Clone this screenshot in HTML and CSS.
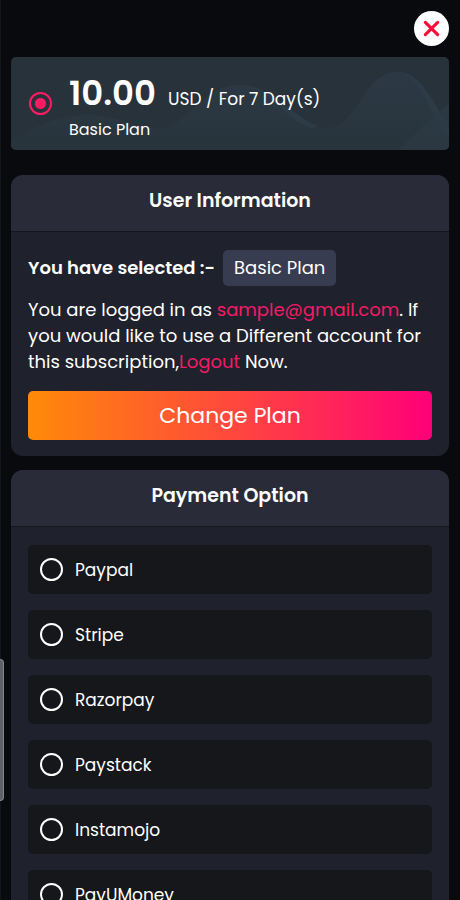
FILE: index.html
```html
<!DOCTYPE html>
<html lang="en">
<head>
<meta charset="utf-8">
<meta name="viewport" content="width=device-width, initial-scale=1">
<title>Subscription</title>
<link rel="stylesheet" href="styles.css">
</head>
<body>
<span class="scroll-thumb" aria-hidden="true"></span>
<main class="screen">
  <header class="topbar">
    <button class="close" type="button" aria-label="Close">
      <svg viewBox="0 0 34 34" aria-hidden="true"><path d="M11 11 23 23M23 11 11 23"/></svg>
    </button>
  </header>

  <label class="plan" for="basic-plan">
    <svg class="waves" viewBox="0 0 438 93" preserveAspectRatio="none" aria-hidden="true">
      <defs>
        <linearGradient id="wave" gradientUnits="userSpaceOnUse" x1="0" y1="15" x2="0" y2="93">
          <stop offset="0" stop-color="#2c3945"/>
          <stop offset="1" stop-color="#28343c"/>
        </linearGradient>
      </defs>
      <path fill="url(#wave)" d="M0 86C28 66 50 58 78 58C108 58 126 72 148 72C176 72 190 28 228 28C262 28 282 67 313 71C348 74 350 15 387 15C412 15 423 58 438 80V93H0Z"/>
      <path fill="#2d3b47" d="M387 15C412 15 423 50 438 68V83C423 68 412 20 387 15Z"/>
      <path fill="#2d3b47" d="M228 28C262 28 282 60 307 69L300 71C272 62 262 32 228 28Z"/>
      <path fill="#2c3a45" opacity=".7" d="M387 93C404 78 420 58 438 47V93Z"/>
    </svg>
    <input class="radio" type="radio" id="basic-plan" name="plan" checked>
    <span class="plan-text">
      <span class="price"><strong>10.00</strong> <span>USD / For 7 Day(s)</span></span>
      <span class="plan-name">Basic Plan</span>
    </span>
  </label>

  <section class="card">
    <h2>User Information</h2>
    <div class="card-body">
      <p class="selected"><strong>You have selected :-</strong> <span class="badge">Basic Plan</span></p>
      <p class="account">You are logged in as <a href="#account">sample@gmail.com</a>. If<br>you would like to use a Different account for<br>this subscription,<a href="#logout">Logout</a> Now.</p>
      <button class="change" type="button">Change Plan</button>
    </div>
  </section>

  <section class="card">
    <h2>Payment Option</h2>
    <div class="card-body options">
      <label class="option"><input class="radio" type="radio" name="payment">Paypal</label>
      <label class="option"><input class="radio" type="radio" name="payment">Stripe</label>
      <label class="option"><input class="radio" type="radio" name="payment">Razorpay</label>
      <label class="option"><input class="radio" type="radio" name="payment">Paystack</label>
      <label class="option"><input class="radio" type="radio" name="payment">Instamojo</label>
      <label class="option"><input class="radio" type="radio" name="payment">PayUMoney</label>
    </div>
  </section>
</main>
</body>
</html>
```
FILE: styles.css
```css
* { box-sizing: border-box; }

body {
  margin: 0;
  background: #090a0e;
  color: #fff;
  font: 18px/26px Poppins, Inter, sans-serif;
}

button, input { font: inherit; margin: 0; }

.screen {
  height: 100vh;
  overflow-y: auto;
  scrollbar-width: none;
  padding: 11px 11px 16px 10px;
  border-left: 1px solid #14161a;
}

.scroll-thumb {
  position: fixed;
  left: 0;
  top: 659px;
  width: 4px;
  height: 142px;
  background: #606163;
  border: 1px solid #858687;
  border-left: 0;
  border-radius: 0 4px 4px 0;
}

.topbar {
  display: flex;
  justify-content: flex-end;
  margin-bottom: 11px;
}

.close {
  width: 35px;
  height: 35px;
  padding: 0;
  border: 0;
  border-radius: 50%;
  background: #fff;
}

.close svg { display: block; width: 100%; }

.close path {
  fill: none;
  stroke: #fb0b38;
  stroke-width: 3;
  stroke-linecap: round;
}

.plan {
  position: relative;
  display: flex;
  align-items: center;
  gap: 17px;
  height: 93px;
  padding: 0 18px;
  margin-bottom: 25px;
  border-radius: 5px;
  background: #28323a;
  overflow: hidden;
}

.waves {
  position: absolute;
  inset: 0;
  width: 100%;
  height: 100%;
}

.radio {
  position: relative;
  flex: none;
  appearance: none;
  width: 23px;
  height: 23px;
  border: 2px solid #fff;
  border-radius: 50%;
}

.radio:checked {
  border-color: #ff1b62;
  background: radial-gradient(circle, #ff1b62 5px, transparent 6px);
}

.plan-text {
  position: relative;
  display: flex;
  flex-direction: column;
  padding-top: 6px;
}

.price {
  display: flex;
  align-items: baseline;
  gap: 12px;
  font-size: 17px;
  line-height: 40px;
}

.price strong { font-size: 34px; font-weight: 600; }

.plan-name { font-size: 16px; line-height: 22px; }

.card {
  margin-bottom: 14px;
  border-radius: 12px;
  background: #1f212c;
  overflow: hidden;
}

.card h2 {
  margin: 0;
  padding: 13px 16px 17px;
  border-bottom: 1px solid #15171e;
  background: #292c38;
  font-size: 19px;
  font-weight: 600;
  text-align: center;
}

.card-body { padding: 18px 17px 16px; }

.selected {
  display: flex;
  align-items: center;
  gap: 8px;
  margin: 0 0 11px;
}

.selected strong { font-weight: 600; }

.badge {
  padding: 5px 11px;
  border-radius: 5px;
  background: #383c50;
}

.account { margin: 0 0 16px; }

.account a { color: #f41b68; text-decoration: none; }

.change {
  display: block;
  width: 100%;
  height: 49px;
  padding: 0;
  border: 0;
  border-radius: 5px;
  background: linear-gradient(90deg, #ff8a08, #ff493c 50%, #ff0078);
  color: #fff;
  font-size: 22px;
}

.options {
  display: flex;
  flex-direction: column;
  gap: 16px;
}

.option {
  display: flex;
  align-items: center;
  gap: 12px;
  height: 49px;
  padding: 0 12px;
  border-radius: 5px;
  background: #16171b;
  font-size: 17px;
}
```
